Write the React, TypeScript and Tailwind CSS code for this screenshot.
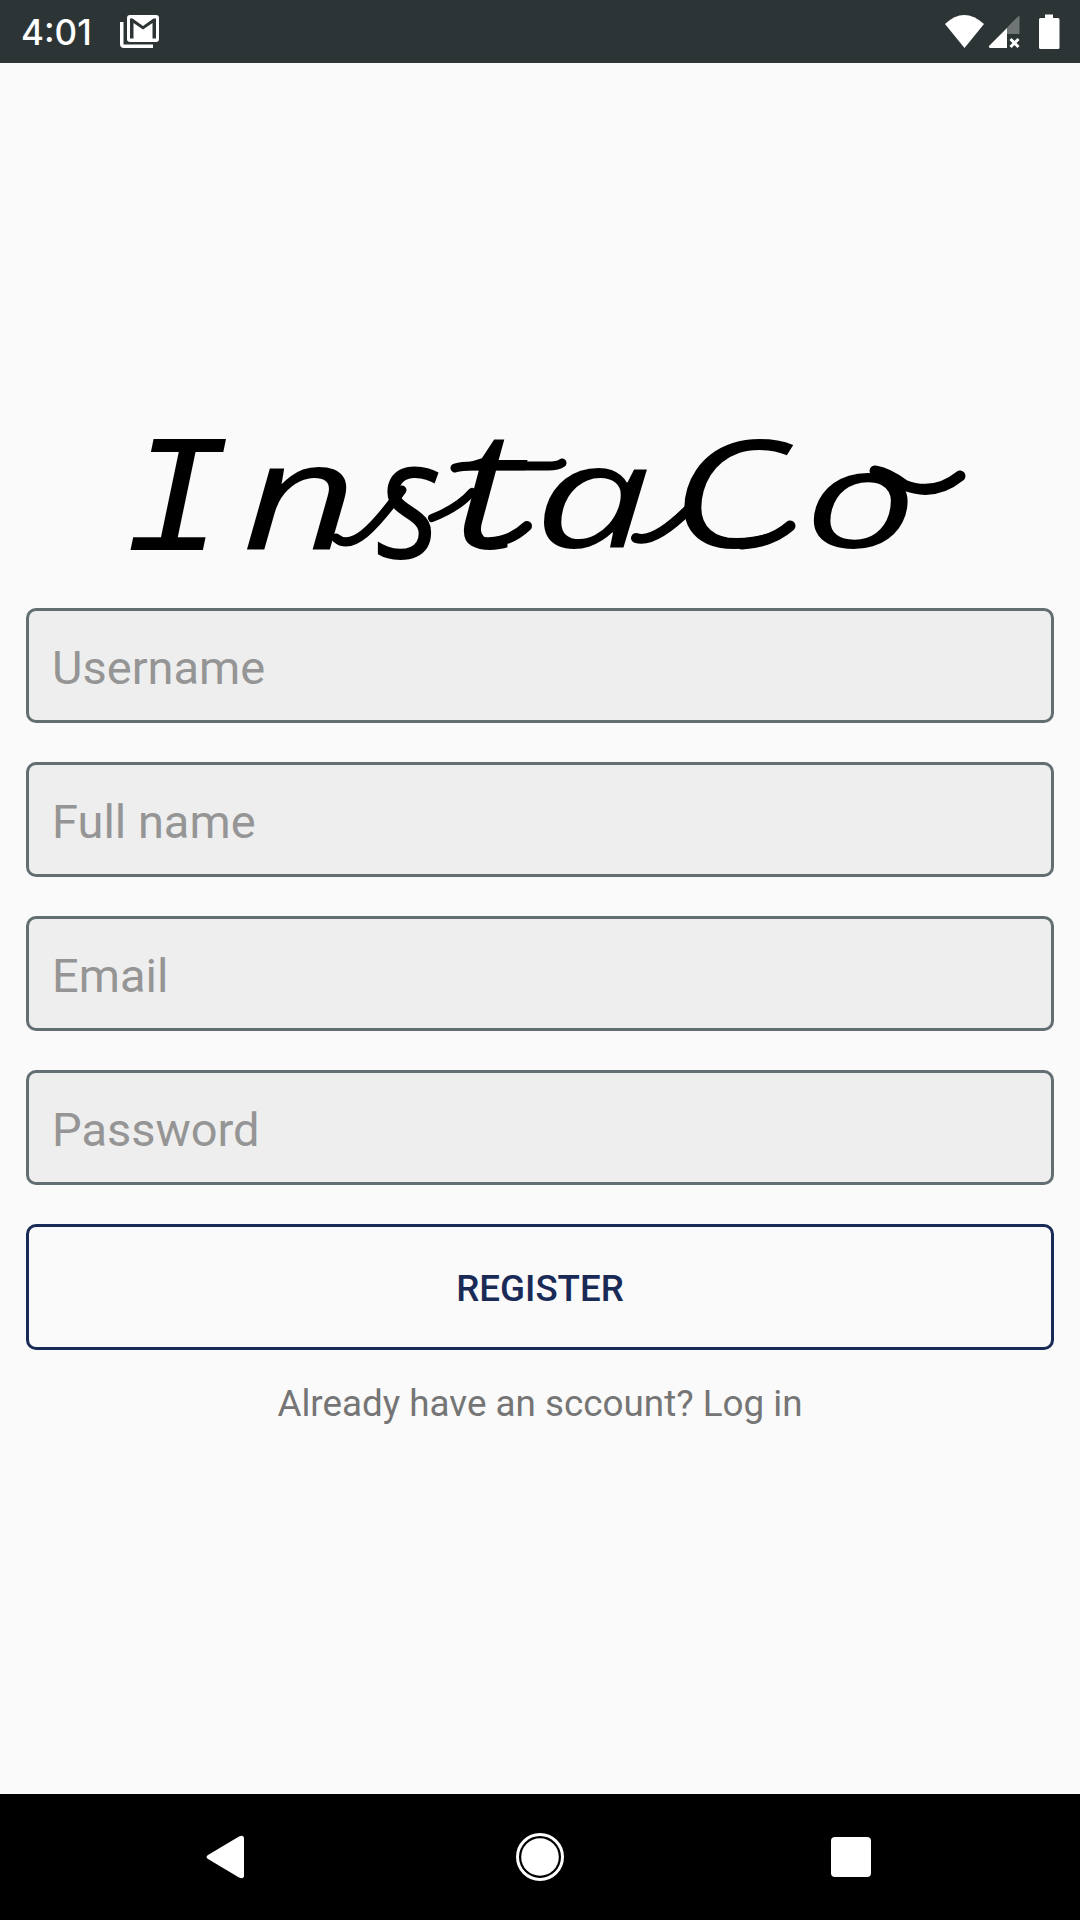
import React from "react";

type Glyph = { char: string; x: number; y: number; sx: number; sy: number; mono?: boolean };

const wordmark: Glyph[] = [
  { char: "I", x: 12, y: 130, sx: 1.06, sy: 0.99, mono: true },
  { char: "n", x: 132, y: 129, sx: 1.33, sy: 1 },
  { char: "s", x: 267, y: 138, sx: 1, sy: 1.12 },
  { char: "t", x: 342, y: 128, sx: 1.4, sy: 1.1 },
  { char: "a", x: 424, y: 128, sx: 1.38, sy: 0.98 },
  { char: "C", x: 560, y: 128, sx: 1.3, sy: 1 },
  { char: "o", x: 694, y: 128, sx: 1.34, sy: 0.92 },
];

function Wordmark() {
  return (
    <svg viewBox="0 0 880 160" className="ml-[110px] h-40 w-[880px] shrink-0 overflow-visible" aria-label="InstaCo">
      {wordmark.map((g, i) => (
        <text
          key={i}
          transform={`translate(${g.x} ${g.y}) scale(${g.sx} ${g.sy})`}
          className={
            g.mono
              ? "fill-black font-['Liberation_Mono',monospace] text-[170px] italic"
              : "fill-black font-['Open_Sans',sans-serif] text-[150px] italic"
          }
        >
          {g.char}
        </text>
      ))}
      <g fill="none" stroke="#000" strokeLinecap="round">
        <path d="M226 118 C242 132 264 108 292 70" strokeWidth="9" />
        <path d="M322 98 Q348 88 362 72" strokeWidth="8" />
        <path d="M345 48 Q352 46 362 46 H438 Q448 46 452 43" strokeWidth="9" />
        <path d="M374 122 Q398 124 417 106" strokeWidth="10" />
        <path d="M526 118 Q544 124 580 88" strokeWidth="10" />
        <path d="M632 124 Q662 122 680 106" strokeWidth="11" />
        <path d="M765 51 Q778 53 794 65 Q824 77 850 56" strokeWidth="11" />
      </g>
    </svg>
  );
}

function StatusBar() {
  return (
    <header className="flex h-[63px] shrink-0 items-center bg-[#2d3436] text-white">
      <span className="ml-[21px] w-[99px] pt-[2px] font-['Inter',sans-serif] text-[35px] font-medium leading-none">4:01</span>
      <svg viewBox="0 0 40 34" className="h-[34px] w-10" fill="currentColor">
        <path d="M0 7h3.5v22.500h29.500V33H4a4 4 0 0 1-4-4Z" />
        <path
          fillRule="evenodd"
          d="M10 0h26a3 3 0 0 1 3 3v21a3 3 0 0 1-3 3H10a3 3 0 0 1-3-3V3a3 3 0 0 1 3-3ZM10 3.500V23.500h3.500V8l9.500 6.500L32.500 8v15.500H36V3.500h-2.500L23 11 12.500 3.500Z"
        />
      </svg>
      <svg viewBox="0 0 116 36" className="ml-auto mr-[19px] h-9 w-[116px]" fill="currentColor">
        <path d="M0 10Q19-8 39 10L19.500 34Z" />
        <path d="M74.500 2v18H62V13.500L73 2.500Z" opacity=".32" />
        <path d="M62 14v20H45q-2-1-.5-2.500Z" />
        <path d="m65.500 25 8 8m0-8-8 8" stroke="currentColor" strokeWidth="3" />
        <path d="M95.500 4H100V.500h8V4h5a1.500 1.500 0 0 1 1.500 1.500v28a1.500 1.500 0 0 1-1.500 1.500H95.500A1.500 1.500 0 0 1 94 33.500v-28A1.500 1.500 0 0 1 95.500 4Z" />
      </svg>
    </header>
  );
}

function Field({ label, type = "text" }: { label: string; type?: string }) {
  return (
    <input
      type={type}
      placeholder={label}
      aria-label={label}
      className="h-[115px] w-full rounded-[10px] border-[3px] border-[#636e72] bg-[#eeeeee] px-[23px] pt-1 text-[47px] text-black outline-none placeholder:text-[#959595] placeholder:opacity-100"
    />
  );
}

function NavigationBar() {
  return (
    <nav className="flex h-[126px] shrink-0 items-center justify-between bg-black pl-[206px] pr-[209px] text-white">
      <svg viewBox="0 0 38 44" className="h-11 w-[38px]" fill="currentColor">
        <path d="M2 20 33 1.500q4-2 5 1v39q-1 3-5 1L2 24q-3-2 0-4Z" />
      </svg>
      <svg viewBox="0 0 48 48" className="ml-1 h-12 w-12">
        <circle cx="24" cy="24" r="22.500" fill="none" stroke="currentColor" strokeWidth="3" />
        <circle cx="24" cy="24" r="18.800" fill="currentColor" />
      </svg>
      <span className="size-10 rounded-[4px] bg-white" />
    </nav>
  );
}

export default function App() {
  return (
    <div className="flex h-[1920px] w-[1080px] flex-col overflow-hidden bg-[#fafafa] font-['Roboto',sans-serif]">
      <StatusBar />
      <main className="flex flex-1 flex-col pt-[357px]">
        <Wordmark />
        <form className="mt-7 flex flex-col gap-[39px] px-[26px]">
          <Field label="Username" />
          <Field label="Full name" />
          <Field label="Email" />
          <Field label="Password" type="password" />
          <button
            type="button"
            className="h-[126px] rounded-[10px] border-[3px] border-[#192a56] pt-1 text-[36.7px] font-medium text-[#192a56]"
          >
            REGISTER
          </button>
        </form>
        <p className="mt-8 text-center text-[36.8px] leading-[44px] text-[#757575]">
          Already have an sccount? Log in
        </p>
      </main>
      <NavigationBar />
    </div>
  );
}
